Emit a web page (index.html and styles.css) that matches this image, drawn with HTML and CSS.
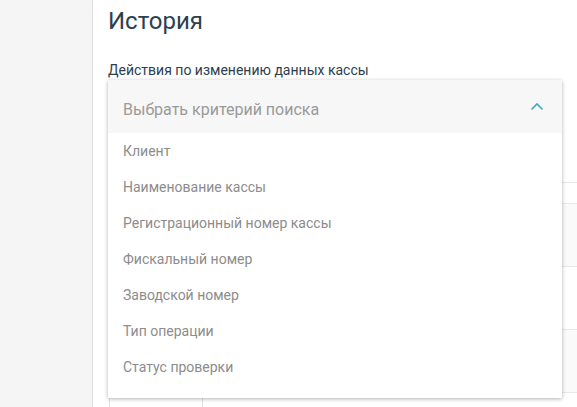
FILE: index.html
```html
<!DOCTYPE html>
<html lang="ru">
<head>
<meta charset="utf-8">
<title>История</title>
<link rel="stylesheet" href="styles.css">
</head>
<body>
<div class="layout">
  <aside class="sidebar"></aside>
  <main class="main">
    <h1 class="title">История</h1>
    <div class="field">
      <label class="field-label">Действия по изменению данных кассы</label>
      <div class="select-wrap">
        <div class="table">
          <div class="trow"><div class="tcell c1"></div><div class="tcell"></div></div>
          <div class="trow"><div class="tcell c1"></div><div class="tcell"></div></div>
          <div class="trow alt"><div class="tcell c1"></div><div class="tcell"></div></div>
          <div class="trow"><div class="tcell c1"></div><div class="tcell"></div></div>
          <div class="trow alt"><div class="tcell c1"></div><div class="tcell"></div></div>
          <div class="trow"><div class="tcell c1"></div><div class="tcell"></div></div>
        </div>
        <div class="dropdown">
          <div class="dropdown-head">
            <span class="placeholder">Выбрать критерий поиска</span>
            <svg class="chevron" width="14" height="9" viewBox="0 0 14 9"><path d="M1.5 7.5 L7 2 L12.5 7.5" fill="none" stroke="#45a6c2" stroke-width="1.6"/></svg>
          </div>
          <ul class="options">
            <li>Клиент</li>
            <li>Наименование кассы</li>
            <li>Регистрационный номер кассы</li>
            <li>Фискальный номер</li>
            <li>Заводской номер</li>
            <li>Тип операции</li>
            <li>Статус проверки</li>
          </ul>
        </div>
      </div>
    </div>
  </main>
</div>
</body>
</html>
```
FILE: styles.css
```css
* { box-sizing: border-box; }
html, body { margin: 0; padding: 0; height: 100%; overflow: hidden; }
body { font-family: Roboto, "Noto Sans", sans-serif; background: #fff; }
.layout { display: flex; height: 407px; overflow: hidden; }
.sidebar { width: 93px; flex: none; background: #f5f5f5; border-right: 1px solid #dcdcdc; }
.main { flex: 1; padding: 0 0 0 15px; overflow: hidden; }
.title { margin: 0; padding-top: 6px; font-size: 24px; font-weight: 400; line-height: 30px; color: #2d3e50; }
.field { margin-top: 26px; }
.field-label { display: block; font-size: 14px; line-height: 16px; color: #2d3e50; }
.select-wrap { position: relative; margin-top: 2px; }
.table { position: absolute; left: 1px; top: 0; right: 0; border-left: 1px solid #e2e2e2; }
.trow { display: flex; height: 63px; border-bottom: 1px solid #e8e8e8; }
.trow:first-child { height: 103px; }
.trow:nth-child(2) { height: 21px; }
.trow.alt { background: #fafafa; }
.tcell { flex: 1; }
.tcell.c1 { flex: none; width: 93px; border-right: 1px solid #e2e2e2; }
.dropdown { position: relative; width: 454px; background: #fff; box-shadow: 0 1px 4px rgba(0,0,0,0.3); z-index: 2; }
.dropdown-head { height: 53px; background: #f7f7f7; display: flex; align-items: center; justify-content: space-between; padding: 0 18px 0 15px; }
.placeholder { font-size: 16px; color: #9a9a9a; padding-top: 6px; }
.chevron { display: block; margin-top: -1px; }
.options { list-style: none; margin: 0; padding: 0 0 13px 0; }
.options li { height: 36px; line-height: 36px; padding-left: 15px; font-size: 14px; color: #8c8c8c; }
```
